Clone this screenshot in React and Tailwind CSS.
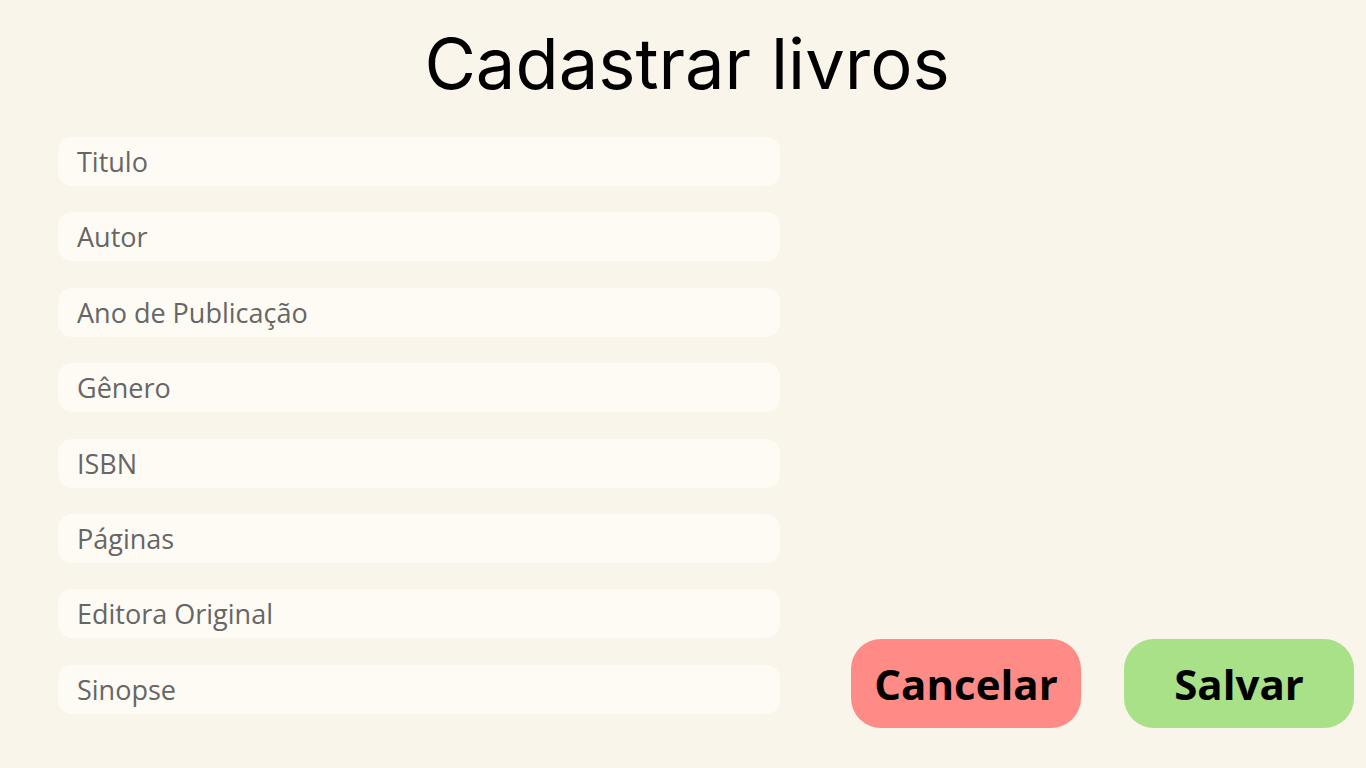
import React from "react";

const fields = [
  "Titulo",
  "Autor",
  "Ano de Publicação",
  "Gênero",
  "ISBN",
  "Páginas",
  "Editora Original",
  "Sinopse",
];

export default function App() {
  return (
    <div className="h-[768px] w-[1366px] overflow-hidden bg-[#f9f5eb] font-['Open_Sans',sans-serif]">
      <h1 className="pt-[22px] pl-[8px] text-center font-['Inter',sans-serif] text-[70.5px] leading-[84px] text-black">
        Cadastrar livros
      </h1>
      <div className="mt-[31px] flex items-start">
        <form className="ml-[58px] flex w-[722px] flex-col gap-[26.4px]">
          {fields.map((label) => (
            <input
              key={label}
              placeholder={label}
              className="h-[49px] rounded-[14px] bg-[#fefbf4] px-[19px] text-[27px] text-[#666] outline-none placeholder:text-[#666]"
            />
          ))}
        </form>
        <div className="ml-[71px] mt-[502px] flex gap-[43px]">
          <button className="h-[89px] w-[230px] rounded-[30px] bg-[#fe8b86] text-[42px] font-bold text-black">
            Cancelar
          </button>
          <button className="h-[89px] w-[230px] rounded-[30px] bg-[#a8e187] text-[42px] font-bold text-black">
            Salvar
          </button>
        </div>
      </div>
    </div>
  );
}
